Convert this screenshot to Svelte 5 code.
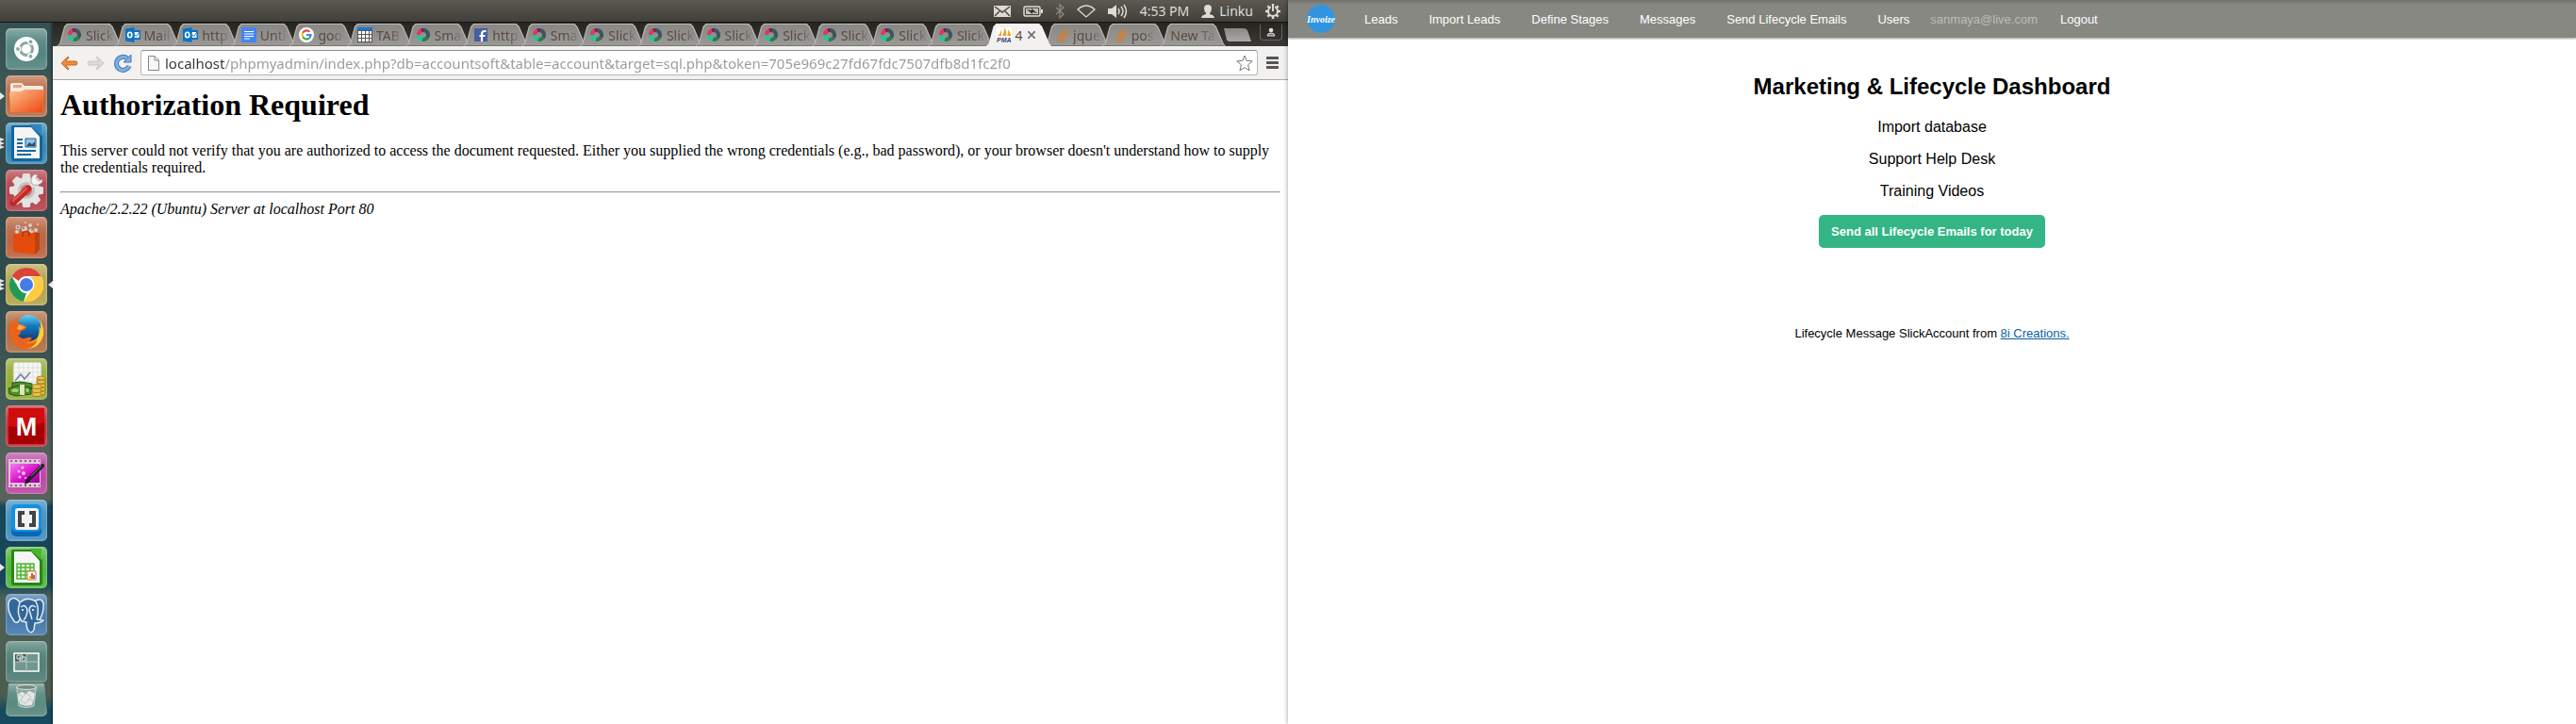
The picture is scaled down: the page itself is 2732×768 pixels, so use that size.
<script>
  const tabs = [
    { icon: 'slick', label: 'Slick' },
    { icon: 'outlook', label: 'Mail' },
    { icon: 'outlook', label: 'http' },
    { icon: 'docs', label: 'Unti' },
    { icon: 'google', label: 'goo' },
    { icon: 'table', label: 'TAB' },
    { icon: 'slick', label: 'Sma' },
    { icon: 'facebook', label: 'http' },
    { icon: 'slick', label: 'Sma' },
    { icon: 'slick', label: 'Slick' },
    { icon: 'slick', label: 'Slick' },
    { icon: 'slick', label: 'Slick' },
    { icon: 'slick', label: 'Slick' },
    { icon: 'slick', label: 'Slick' },
    { icon: 'slick', label: 'Slick' },
    { icon: 'slick', label: 'Slick' },
    { icon: 'pma', label: '4', active: true },
    { icon: 'stack', label: 'jque' },
    { icon: 'stack', label: 'pos' },
    { icon: '', label: 'New Ta' }
  ];

  const apps = [
    { id: 'ubuntu', name: 'Dash', color: '#4f817b' },
    { id: 'files', name: 'Files', color: '#b9683f', left: 1 },
    { id: 'writer', name: 'Writer', color: '#2f83b4', left: 3 },
    { id: 'settings', name: 'Settings', color: '#b43c46' },
    { id: 'software', name: 'Software', color: '#b8603b' },
    { id: 'chrome', name: 'Chrome', color: '#b3a147', left: 3, right: true },
    { id: 'firefox', name: 'Firefox', color: '#ae6a41' },
    { id: 'money', name: 'Accounts', color: '#92ac2f' },
    { id: 'mega', name: 'M', color: '#bd2029' },
    { id: 'pen', name: 'Editor', color: '#b943a0' },
    { id: 'brackets', name: 'Brackets', color: '#3d8dbb' },
    { id: 'calc', name: 'Calc', color: '#4db235', left: 1 },
    { id: 'postgres', name: 'PostgreSQL', color: '#3f76ab' },
    { id: 'switcher', name: 'Workspaces', color: '#4b7b72' },
    { id: 'trash', name: 'Trash', color: '#55867b' }
  ];

  const nav = ['Leads', 'Import Leads', 'Define Stages', 'Messages', 'Send Lifecycle Emails', 'Users'];
  const links = ['Import database', 'Support Help Desk', 'Training Videos'];
  const gearTeeth = [0, 45, 90, 135, 180, 225, 270, 315];
  let url = $state('localhost/phpmyadmin/index.php?db=accountsoft&table=account&target=sql.php&token=705e969c27fd67fdc7507dfb8d1fc2f0');
</script>

{#snippet favicon(name)}
  <svg class="fav" viewBox="0 0 16 16" aria-hidden="true">
    {#if name === 'slick'}
      <g fill="none" stroke-width="4">
        <path d="M8 3A5 5 0 0 1 12 11" stroke="#3c5560" />
        <path d="M12 11A5 5 0 0 1 7 12.900" stroke="#307a50" />
        <path d="M7 12.900A5 5 0 0 1 3 8" stroke="#1ac99c" />
        <path d="M3 8A5 5 0 0 1 6 3.400" stroke="#ee3157" />
        <path d="M6 3.400A5 5 0 0 1 8 3" stroke="#7b174d" />
      </g>
    {:else if name === 'outlook'}
      <path d="M8 3h8v10H8z" fill="#0a72c6" />
      <path d="M9.500 5h5v6h-5z" fill="#fff" />
      <path d="m10 8 1.500 1.500L15 5" stroke="#0a72c6" fill="none" />
      <path d="M0 1.500 9.500 0v16L0 14.500z" fill="#0a72c6" />
      <ellipse cx="4.700" cy="8" rx="2.100" ry="2.700" fill="none" stroke="#fff" stroke-width="1.600" />
    {:else if name === 'docs'}
      <path d="M0 0h16v16H0z" fill="#4285f4" />
      <path d="M3 4.500h10M3 7h10M3 9.500h10M3 12h6" stroke="#fff" stroke-width="1.200" />
    {:else if name === 'google'}
      <circle cx="8" cy="8" r="8" fill="#fff" />
      <g fill="none" stroke-width="2.200">
        <path d="M4.200 5.700A4.500 4.500 0 0 1 11.400 4.800" stroke="#ea4335" />
        <path d="M4.200 5.700A4.500 4.500 0 0 0 4.200 10.300" stroke="#fbbc05" />
        <path d="M4.200 10.300A4.500 4.500 0 0 0 11.200 11.300" stroke="#34a853" />
        <path d="M11.200 11.300A4.500 4.500 0 0 0 12.500 8H8" stroke="#4285f4" />
      </g>
    {:else if name === 'table'}
      <path d="M0 0h16v16H0z" fill="#555" />
      <path d="M0 0h16v3H0z" fill="#1a78d8" />
      <path d="M1 4h3v3H1zM5 4h3v3H5zM9 4h3v3H9zM13 4h2v3h-2zM1 8h3v3H1zM5 8h3v3H5zM9 8h3v3H9zM13 8h2v3h-2zM1 12h3v3H1zM5 12h3v3H5zM9 12h3v3H9zM13 12h2v3h-2z" fill="#fff" />
    {:else if name === 'facebook'}
      <path d="M1 1h14v14H1z" fill="#435f9f" />
      <path d="M9 15V7q0-3 3-3h1.500M6.500 9h6" fill="none" stroke="#fff" stroke-width="2.200" />
    {:else if name === 'pma'}
      <path d="M0 0h16v16H0z" fill="#fff" />
      <path d="M1 9Q4 7 5 2v7zM6 9Q9 4 8 0q3 4 2 9zM11 9q2-3 1-7 3 4 3 7z" fill="#f79a16" />
      <text x="0" y="16" font-size="7" font-weight="bold" font-style="italic" font-family="Liberation Sans, sans-serif" fill="#34336b">PMA</text>
    {:else if name === 'stack'}
      <g fill="none" stroke="#e07a28" stroke-width="1.400">
        <path d="M4 13.500h7M4 11.200l7 .5M4.700 8.600l6.600 1.800M6.500 5.500l5.500 4M9.500 3l3.600 5.700M13 1l.9 6.500" />
        <path d="M2.500 10v5.300h10V10" stroke="#9c8d7f" />
      </g>
    {/if}
  </svg>
{/snippet}

{#snippet appIcon(id)}
  <svg viewBox="0 0 44 44" aria-hidden="true">
    {#if id === 'ubuntu'}
      <circle cx="22" cy="22" r="13" fill="#fff" />
      <circle cx="22" cy="22" r="6.500" fill="none" stroke="#8ba9a6" stroke-width="3" />
      <g fill="#8ba9a6" stroke="#fff" stroke-width="1.500">
        <circle cx="13" cy="22" r="2.700" /><circle cx="26.500" cy="14.200" r="2.700" /><circle cx="26.500" cy="29.800" r="2.700" />
      </g>
    {:else if id === 'files'}
      <path d="M5 10q0-2 2-2h10l3 3h18q2 0 2 2v6H5z" fill="#f1e9e3" />
      <path d="M8 10h9v3H8z" fill="#f0a37c" />
      <path d="M4 19q0-2 2-2h10l4-2h19q2 0 2 2l-2 21q0 1-2 1H7q-2 0-2-1z" fill="url(#orange)" />
    {:else if id === 'writer' || id === 'calc'}
      <path d="M8 3h21l10 11v24q0 3-3 3H8q-2 0-2-3V5q0-2 2-2z" fill={id === 'writer' ? '#14669c' : '#258719'} />
      <path d="M9 5h18l9 10v23H9z" fill="#f4f5f4" />
      <path d="M25 2h12q1 0 1 1v11z" fill={id === 'writer' ? '#2f86bd' : '#48b82b'} />
      {#if id === 'writer'}
        <path d="M12 18h6M12 22h6M12 26h6M12 30h20M12 34h15" stroke="#17679e" stroke-width="2" />
        <path d="M21 17h11v9H21z" fill="#8fc4e5" stroke="#17679e" />
        <path d="m22 25 3-4 3 2 3-3v5z" fill="#31505b" />
      {:else}
        <path d="M12 18h18v16H12z" fill="#e1f5d8" />
        <path d="M12 18h18v16H12zM12 22h18M12 26h18M12 30h18M16 18v16M21 18v16M26 18v16" stroke="#53b438" fill="none" stroke-width="1.500" />
        <path d="M23 26h9v9h-9z" fill="#fff" stroke="#e76e3b" />
        <path d="M25 31h2v3h-2z" fill="#e9b128" /><path d="M27 28h2v6h-2z" fill="#e25b2a" /><path d="M29 30h2v4h-2z" fill="#5d80bf" />
      {/if}
    {:else if id === 'settings'}
      <g fill="#e3e4e2">
        {#each gearTeeth as angle}<path d="m18 5 1-1h6l1 1 1 8H17z" transform="rotate({angle} 22 22)" />{/each}
      </g>
      <circle cx="22" cy="22" r="11" fill="none" stroke="#e3e4e2" stroke-width="6" />
      <circle cx="22" cy="22" r="9" fill="#c4c2c2" />
      <circle cx="22" cy="22" r="6" fill="#d06f75" />
      <path d="m22 22 9-9" stroke="#dfe0de" stroke-width="5" />
      <path d="M30 5q-5 5-2 10 5 4 11-2v-3l-4 2-3-3 2-4z" fill="#f3f4f2" stroke="#9e9390" stroke-width=".8" />
      <path d="M8 35 24 20" stroke="#bf2926" stroke-width="7" stroke-linecap="round" />
      <path d="M8 33 22 20" stroke="#e35b56" stroke-width="2" stroke-linecap="round" />
    {:else if id === 'software'}
      <g fill="#e0cdc5"><circle cx="13" cy="11" r="2.500" /><circle cx="20" cy="13" r="3" /><circle cx="26" cy="9" r="2" /><circle cx="32" cy="14" r="2" /><circle cx="12" cy="16" r="2" /><circle cx="27" cy="15" r="2.500" /><circle cx="21" cy="6" r="1" /><circle cx="34" cy="8" r="1" /></g>
      <g fill="#7c8c9c"><circle cx="13" cy="11" r="1.300" /><circle cx="19" cy="12" r="1.200" /><circle cx="28" cy="14" r="1" /></g>
      <path d="m8 18 28-1v18l-5 5-23-3z" fill="#e54b0a" />
      <path d="m31 17 5 0v18l-5 5z" fill="#ba4310" />
      <path d="M18 21v-4q4-3 7 0v4" fill="none" stroke="#c23a06" stroke-width="2" />
    {:else if id === 'chrome'}
      <circle cx="22" cy="22" r="18" fill="#fff" />
      <path d="M6.400 13A18 18 0 0 1 37.600 13H22a9 9 0 0 0-8 5z" fill="#da4538" />
      <path d="M6.400 13 14 26a9 9 0 0 0 8 5l-3 9A18 18 0 0 1 6.400 13z" fill="#209b55" />
      <path d="M37.600 13A18 18 0 0 1 19 40l9-13q4-6-2-13z" fill="#ffcb40" />
      <circle cx="22" cy="22" r="8.500" fill="#fff" /><circle cx="22" cy="22" r="7" fill="#447de8" />
    {:else if id === 'firefox'}
      <circle cx="22" cy="22" r="18" fill="url(#fox)" />
      <circle cx="24" cy="18" r="14" fill="url(#globe)" />
      <path d="M35 8q6 8 5 17-2 9-9 13-8 3-15 0 12 1 17-8 4-8 2-14 2 2 2 4 1-6-2-12z" fill="#ffcf38" />
      <path d="M5 12 8 15l5-6 1 5q4-1 8 3-1 3-6 4 0 4-3 5 4 5 10 2 3-1 5 1-3 4-8 5 8 3 14-5-3 11-13 11Q5 38 4 23q0-6 1-11z" fill="#e8641c" />
      <path d="m14 14 7 3-5 3-4-1z" fill="#f7a64a" />
    {:else if id === 'money'}
      <path d="M9 4h27q2 0 2 2v23H8V6z" fill="#f7f7f3" stroke="#aeb291" />
      <path d="M14 5v23M19 5v23M24 5v23M29 5v23M34 5v23M9 10h28M9 15h28M9 20h28M9 25h28" stroke="#d5d9d1" stroke-width=".7" />
      <path d="m10 24 6-7 4 5 6-7" fill="none" stroke="#6886a5" stroke-width="1.500" />
      <path d="m7 26 9-1 12 2v5l-9 3L7 33zM3 32l10-3 14 2v7l-16 2-7-2z" fill="#4c8d2d" stroke="#245817" />
      <path d="M15 28h5v11h-5z" fill="#dfe7ba" /><ellipse cx="10" cy="34" rx="4" ry="2" fill="#a3d15e" /><ellipse cx="23" cy="34" rx="2" ry="2" fill="#a3d15e" />
      <g fill="#e5c14a" stroke="#98751b" stroke-width=".8">
        <path d="M33 21h9v17h-9z" /><ellipse cx="37.500" cy="37" rx="4.500" ry="2" /><ellipse cx="37.500" cy="33" rx="4.500" ry="2" /><ellipse cx="37.500" cy="29" rx="4.500" ry="2" /><ellipse cx="37.500" cy="25" rx="4.500" ry="2" /><ellipse cx="37.500" cy="21" rx="4.500" ry="2" />
        <ellipse cx="33" cy="38" rx="5" ry="2.500" /><ellipse cx="33" cy="34" rx="5" ry="2.500" /><ellipse cx="33" cy="30" rx="5" ry="2.500" />
      </g>
    {:else if id === 'mega'}
      <path d="M3 3h38v38H3z" fill="#cf0d0d" /><path d="M3 22q19 3 38-4v23H3z" fill="#a60003" />
      <text x="22" y="32" text-anchor="middle" font-family="Liberation Sans, sans-serif" font-size="27" font-weight="bold" fill="#fff">M</text>
    {:else if id === 'pen'}
      <path d="M3 7h34v30H3z" fill="#e2c5dd" /><path d="M5 12h31v20H5z" fill="url(#pink)" />
      <path d="M5 9h31M5 35h31" stroke="#80617b" stroke-width="2" stroke-dasharray="2 3" />
      <g fill="#ffc0ff"><circle cx="18" cy="16" r="1.500" /><circle cx="14" cy="20" r="1.500" /><circle cx="19" cy="22" r="2" /><circle cx="15" cy="26" r="1.500" /><circle cx="21" cy="27" r="1" /></g>
      <path d="m23 30 16-16" stroke="#271d2b" stroke-width="4" stroke-linecap="round" /><path d="m27 25 11-11" stroke="#8f7b8f" /><path d="m20 34 2-6 4 3z" fill="#171018" />
    {:else if id === 'brackets'}
      <rect x="6" y="6" width="32" height="33" rx="5" fill="#0867b7" /><rect x="6" y="5" width="32" height="29" rx="5" fill="#1590df" />
      <rect x="10" y="9" width="25" height="23" rx="3" fill="#f1f3f3" />
      <path d="M20 14h-5v13h5M25 14h5v13h-5" fill="none" stroke="#444" stroke-width="4" />
    {:else if id === 'postgres'}
      <g fill="#33679a" stroke="#e5ebf0" stroke-width="1.500" stroke-linejoin="round">
        <path d="M15 9Q9 1 4 7q-4 9 5 22 4 4 7-4zM30 8q8-5 10 2 1 10-5 19l-6-2z" />
        <path d="M15 9q8-7 17-1 4 7 1 19l7 1q-3 3-9 3l-1 7q-2 4-5 2-3-2-3-10l-5-1q-6-8-2-20z" />
        <path d="M16 14q5-4 7 3 0 6-4 11M32 14q-6-4-7 3l3 10" fill="none" />
      </g>
      <circle cx="18" cy="17" r="1" fill="#fff" /><circle cx="29" cy="17" r="1" fill="#fff" />
    {:else if id === 'switcher'}
      <path d="M9 13h26v19H9z" fill="#73968e" stroke="#fff" stroke-width="1.500" /><path d="M10 14h12v8H10z" fill="#405951" />
      <path d="M22 13v19M9 22h26" stroke="#b8c9c4" /><path d="M12 15h6v4h-6zM15 17h6v4h-6z" fill="#516b62" stroke="#e3ebe7" />
    {:else if id === 'trash'}
      <path d="m9 5 3 25q10 4 20 0l3-25z" fill="#a2b8b2" fill-opacity=".6" stroke="#d9e0dd" /><ellipse cx="22" cy="5" rx="13" ry="3" fill="#6e8b83" stroke="#eef1ef" />
      <path d="m11 14 5-3 5 3 4-4 8 3-1 8-3 8-7 1-8-2-3-7z" fill="#e4e7e6" /><path d="m11 14 6 4-3 5 7 4 4-6 7 2M17 18l5-5 6 5-4 5" fill="none" stroke="#b2bcb9" />
    {/if}
  </svg>
{/snippet}

<div class="displays">
  <section class="desktop">
    <svg class="defs" width="0" height="0" aria-hidden="true">
      <defs>
        <linearGradient id="orange" x2="1" y2="1"><stop stop-color="#ffc18b" /><stop offset="1" stop-color="#ed4512" /></linearGradient>
        <linearGradient id="globe" x2="0" y2="1"><stop stop-color="#6ed0f2" /><stop offset=".4" stop-color="#147bc2" /><stop offset="1" stop-color="#123775" /></linearGradient>
        <linearGradient id="fox" x2="1" y2="0"><stop stop-color="#e4601c" /><stop offset=".6" stop-color="#ee7d22" /><stop offset="1" stop-color="#ffd43b" /></linearGradient>
        <linearGradient id="pink" x2="1" y2="1"><stop stop-color="#f47ce9" /><stop offset=".6" stop-color="#d609c6" /><stop offset="1" stop-color="#8e0594" /></linearGradient>
      </defs>
    </svg>
    <header class="panel">
      <svg width="18" height="12" viewBox="0 0 18 12" aria-hidden="true"><path d="M0 0h18v12H0z" fill="#dfdbd2" /><path d="m1 1 8 6 8-6M1 11l5-5M17 11l-5-5" fill="none" stroke="#4b4942" stroke-width="1.500" /></svg>
      <svg width="21" height="12" viewBox="0 0 21 12" aria-hidden="true"><rect x="1" y="1" width="17" height="10" rx="1.500" fill="none" stroke="#dfdbd2" stroke-width="1.500" /><path d="M3 3h13v6H3z" fill="#c6c2b9" /><path d="M19 4h2v4h-2z" fill="#dfdbd2" /><path d="m4 4 5 1V3l6 5-5-1v2z" fill="#33322e" /></svg>
      <svg width="10" height="16" viewBox="0 0 10 16" aria-hidden="true"><path d="m1 4 8 7-4 4V1l4 3-8 7" fill="none" stroke="#8d8a82" stroke-width="1.300" /></svg>
      <svg width="20" height="14" viewBox="0 0 20 14" aria-hidden="true"><path d="M1 5q9-8 18 0l-9 8z" fill="none" stroke="#dfdbd2" stroke-width="1.300" /></svg>
      <svg width="21" height="16" viewBox="0 0 21 16" aria-hidden="true"><path d="M0 5h4l5-4v14l-5-4H0z" fill="#dfdbd2" /><path d="M11 5q2 3 0 6M14 3q4 5 0 10M17 1q5 7 0 14" fill="none" stroke="#dfdbd2" stroke-width="1.500" /></svg>
      <time>4:53 PM</time>
      <span class="user">
        <svg width="14" height="14" viewBox="0 0 14 14" aria-hidden="true"><path d="M3 4q0-4 4-4t4 4q0 3-2 5v1q5 1 5 4H0q0-3 5-4V9Q3 7 3 4z" fill="#dfdbd2" /></svg>
        Linku
      </span>
      <svg width="16" height="16" viewBox="0 0 16 16" aria-hidden="true"><g fill="none" stroke="#dfdbd2"><circle cx="8" cy="8" r="5" stroke-width="2" />{#each gearTeeth as angle}<path d="M8 0v3" stroke-width="2.400" transform="rotate({angle} 8 8)" />{/each}</g><path d="M6 2h4v6H6z" fill="#4b4a44" /><path d="M8 1v7" stroke="#dfdbd2" stroke-width="2" /></svg>
    </header>

    <div class="workspace">
      <nav class="launcher" aria-label="Launcher">
        {#each apps as app}
          <div class="slot">
            {#if app.left}
              <span class="marks">{#each Array(app.left) as _}<i class:many={app.left > 1}></i>{/each}</span>
            {/if}
            <button class="app {app.id}" style:background-color={app.color} aria-label={app.name}>{@render appIcon(app.id)}</button>
            {#if app.right}<span class="focus"></span>{/if}
          </div>
        {/each}
      </nav>

      <div class="browser">
        <div class="strip">
          <div class="tabs">
            {#each tabs as tab}
              <div class="tab" class:active={tab.active}>
                <div class="shape"></div>
                <button class="tab-button">
                  {#if tab.icon}{@render favicon(tab.icon)}{/if}
                  <span class="label">{tab.label}</span>
                </button>
                {#if tab.active}
                  <button class="close" aria-label="Close tab"><svg width="8" height="8" viewBox="0 0 8 8" aria-hidden="true"><path d="m0 0 8 8M8 0 0 8" stroke="#77736f" stroke-width="1.800" /></svg></button>
                {/if}
              </div>
            {/each}
          </div>
          <button class="new-tab" aria-label="Open new tab"></button>
          <button class="profile" aria-label="Profile"><svg width="10" height="10" viewBox="0 0 10 10" aria-hidden="true"><circle cx="5" cy="3" r="2.300" fill="#ddd" /><path d="M1 9q0-3 4-3t4 3z" fill="#777" stroke="#ddd" /></svg></button>
        </div>

        <div class="toolbar">
          <button aria-label="Back"><svg width="20" height="18" viewBox="0 0 20 18" aria-hidden="true"><path d="m9 2-7 7 7 7 1-1-3-4h11q2-2 0-4H7l3-4z" fill="#f08a3c" stroke="#c96824" /></svg></button>
          <button aria-label="Forward"><svg width="20" height="18" viewBox="0 0 20 18" aria-hidden="true"><path d="m11 2 7 7-7 7-1-1 3-4H2q-2-2 0-4h11l-3-4z" fill="#dcdad7" stroke="#c9c6c2" /></svg></button>
          <button aria-label="Reload"><svg width="19" height="20" viewBox="0 0 19 20" aria-hidden="true"><path d="M14 5A7 7 0 1 0 16 13" fill="none" stroke="#4878b4" stroke-width="5" /><path d="M18 1v8h-8z" fill="#7fb0e5" stroke="#4878b4" /><path d="M14 5A7 7 0 1 0 16 13" fill="none" stroke="#7fb0e5" stroke-width="3" /></svg></button>
          <div class="omnibox">
            <svg width="12" height="16" viewBox="0 0 12 16" aria-hidden="true"><path d="M.5.5H7L11.500 5v10.500H.5zM7 .5V5h4.500" fill="#f7f7f7" stroke="#858585" /></svg>
            <input aria-label="Address" bind:value={url} spellcheck="false" />
            <button aria-label="Bookmark"><svg width="18" height="18" viewBox="0 0 18 18" aria-hidden="true"><path d="m9 1 2.200 5.400 6 .5-4.600 3.900 1.500 6L9 13.600l-5.100 3.200 1.500-6L.8 6.900l6-.5z" fill="#fff" stroke="#777" stroke-linejoin="round" /></svg></button>
          </div>
          <button aria-label="Menu"><svg width="13" height="13" viewBox="0 0 13 13" aria-hidden="true"><path d="M1 1.500h11M1 6.500h11M1 11.500h11" stroke="#555" stroke-width="3" stroke-linecap="round" /></svg></button>
        </div>

        <article class="page">
          <h1>Authorization Required</h1>
          <p>This server could not verify that you are authorized to access the document requested. Either you supplied the wrong credentials (e.g., bad password), or your browser doesn't understand how to supply the credentials required.</p>
          <hr />
          <address>Apache/2.2.22 (Ubuntu) Server at localhost Port 80</address>
        </article>
      </div>
    </div>
  </section>

  <section class="dashboard">
    <nav class="topnav">
      <a class="logo" href="#home" aria-label="Invoize"><svg width="30" height="30" viewBox="0 0 30 30" aria-hidden="true"><circle cx="15" cy="15" r="15" fill="#3294df" /><text x="15" y="19" text-anchor="middle" font-family="Liberation Serif, serif" font-size="10" font-style="italic" font-weight="bold" fill="#fff">Invoize</text></svg></a>
      <div class="menu">{#each nav as item}<a href="#{item}">{item}</a>{/each}</div>
      <div class="account"><span>sanmaya@live.com</span><a href="#logout">Logout</a></div>
    </nav>
    <main>
      <h1>Marketing &amp; Lifecycle Dashboard</h1>
      {#each links as link}<p><a href="#{link}">{link}</a></p>{/each}
      <button class="send">Send all Lifecycle Emails for today</button>
      <footer>Lifecycle Message SlickAccount from <a href="#creations">8i Creations.</a></footer>
    </main>
  </section>
</div>

<style>
  :global(body) { background: #fff; }
  button { border: 0; padding: 0; background: none; font: inherit; color: inherit; display: flex; align-items: center; }
  svg { display: block; flex: none; }
  .defs { position: absolute; }
  .displays { display: grid; grid-template-columns: 1fr 1fr; min-height: 100vh; }
  .desktop { display: flex; flex-direction: column; min-width: 0; background: #fff; font-family: "Noto Sans", "Open Sans", sans-serif; }
  .panel { height: 24px; box-sizing: border-box; padding: 0 8px; display: flex; align-items: center; justify-content: flex-end; gap: 13px; background: linear-gradient(#5b5950, #403f3a); border-bottom: 1px solid #171612; color: #dfdbd2; font-size: 14px; }
  .user { display: flex; align-items: center; gap: 5px; }
  .workspace { display: flex; flex: 1; min-width: 0; }

  .launcher { width: 56px; box-sizing: border-box; padding-top: 6px; display: flex; flex-direction: column; gap: 6px; background: linear-gradient(90deg, transparent 53px, #0006), linear-gradient(#344f52, #3e5755 10%, #34494b 20%, #2e4a4e 38%, #3f5754 50%, #56645a 64%, #576359 68%, #17465a 69%, #17465a 80%, #4c6057 82%, #4c5d50 96%, #164a5f 98%); }
  .slot { position: relative; display: flex; justify-content: center; }
  .app { width: 44px; height: 44px; border-radius: 5px; background-image: linear-gradient(#ffffff55, #ffffff18 30%, #ffffff08 60%, #ffffff20); box-shadow: inset 0 0 2px 1px #ffffff45; justify-content: center; }
  .app svg { width: 44px; height: 44px; }
  .slot:last-child { margin-top: -5px; }
  .trash { height: 35px; clip-path: polygon(3px 0, 41px 0, 44px 32px, 42px 35px, 2px 35px, 0 32px); }
  .trash svg { height: 35px; }
  .marks { position: absolute; left: 0; top: 0; bottom: 0; display: flex; flex-direction: column; justify-content: center; }
  .marks i { border: 4px solid transparent; border-left: 5px solid #e7e7e5; border-right: 0; }
  .marks i.many { border-width: 2px 0 2px 5px; }
  .focus { position: absolute; right: 0; top: 18px; border: 4px solid transparent; border-right: 5px solid #e7e7e5; border-left: 0; }

  .browser { flex: 1; min-width: 0; display: flex; flex-direction: column; background: #fff; }
  .strip { height: 25px; display: flex; background: linear-gradient(#262522, #3a3934); }
  .tabs { flex: 1; min-width: 0; display: flex; padding: 1px 0 0 4px; }
  .tab { position: relative; flex: 1 1 0; min-width: 0; display: flex; align-items: center; }
  .shape { position: absolute; inset: 0 -8px 0 0; background: #bcb9b5; clip-path: polygon(0 100%, 3px 90%, 8px 12%, 11px 0, calc(100% - 13px) 0, calc(100% - 10px) 12%, calc(100% - 2px) 90%, 100% 100%); }
  .shape::after { content: ""; position: absolute; inset: 1px 1px 0; background: linear-gradient(#898784, #9b9996); border-bottom: 1px solid #777572; clip-path: inherit; }
  .active { z-index: 1; }
  .active .shape, .active .shape::after { background: #f2f1f0; border: 0; }
  .tab-button { position: relative; flex: 1; min-width: 0; padding-left: 11px; gap: 4px; height: 24px; color: #594b44; font-size: 14px; }
  .fav { width: 16px; height: 16px; }
  .label { flex: none; white-space: nowrap; mask-image: linear-gradient(90deg, #000 60%, #0003); }
  .active .label { mask-image: none; }
  .close { position: relative; padding-right: 9px; }
  .new-tab { width: 30px; height: 14px; margin: 6px 9px 0 5px; background: linear-gradient(#8a8885, #aaa8a5); clip-path: polygon(1px 0, 23px 0, 26px 2px, 30px 100%, 6px 100%, 4px 88%); }
  .profile { width: 24px; height: 17px; margin: 2px 6px 0 0; border: 1px solid #66645e; border-top: 0; border-radius: 0 0 4px 4px; box-sizing: border-box; justify-content: center; }

  .toolbar { height: 36px; box-sizing: border-box; padding: 4px 10px 4px 7px; display: flex; align-items: center; gap: 9px; background: #f2f1f0; border-bottom: 1px solid #aaa8a5; }
  .omnibox { flex: 1; min-width: 0; height: 27px; box-sizing: border-box; border: 1px solid #b8b5b1; border-top-color: #8d8b88; border-radius: 3px; background: #fff; display: flex; align-items: center; gap: 6px; padding: 0 4px 0 7px; }
  input { flex: 1; min-width: 0; border: 0; outline: 0; padding: 0; font: 15px "Noto Sans", "Open Sans", sans-serif; color: transparent; background: linear-gradient(90deg, #333 64px, #999 64px); -webkit-background-clip: text; background-clip: text; }

  .page { padding: 8px; font: 16px/18px "Liberation Serif", serif; color: #000; }
  .page h1 { margin: 0 0 21px; font-size: 32px; line-height: 37px; }
  .page p { margin: 0 0 16px; }
  .page hr { margin: 0 0 8px; }

  .dashboard { position: relative; min-width: 0; background: #fff; box-shadow: 0 0 5px #0006; font: 13px "Liberation Sans", Arial, sans-serif; color: #000; }
  .topnav { height: 40px; box-sizing: border-box; padding: 0 20px; display: flex; align-items: center; background: linear-gradient(#71716c, #888882 5px); box-shadow: 0 1px 2px #0006; }
  .topnav a { color: #fff; text-decoration: none; }
  .menu { display: flex; gap: 33px; margin-left: 31px; }
  .account { display: flex; gap: 24px; margin-left: 22px; color: #bdbdb9; }
  main { text-align: center; padding-top: 38px; display: flex; flex-direction: column; align-items: center; }
  main h1 { margin: 0 0 20px; font-size: 24px; line-height: 28px; }
  main p { margin: 0 0 16px; font-size: 16px; line-height: 18px; }
  main p a { color: inherit; text-decoration: none; }
  .send { height: 35px; padding: 0 13px; border-radius: 5px; background: #33b586; color: #fff; font-weight: bold; }
  footer { margin-top: 83px; line-height: 15px; }
  footer a { color: #075fa5; }
</style>
